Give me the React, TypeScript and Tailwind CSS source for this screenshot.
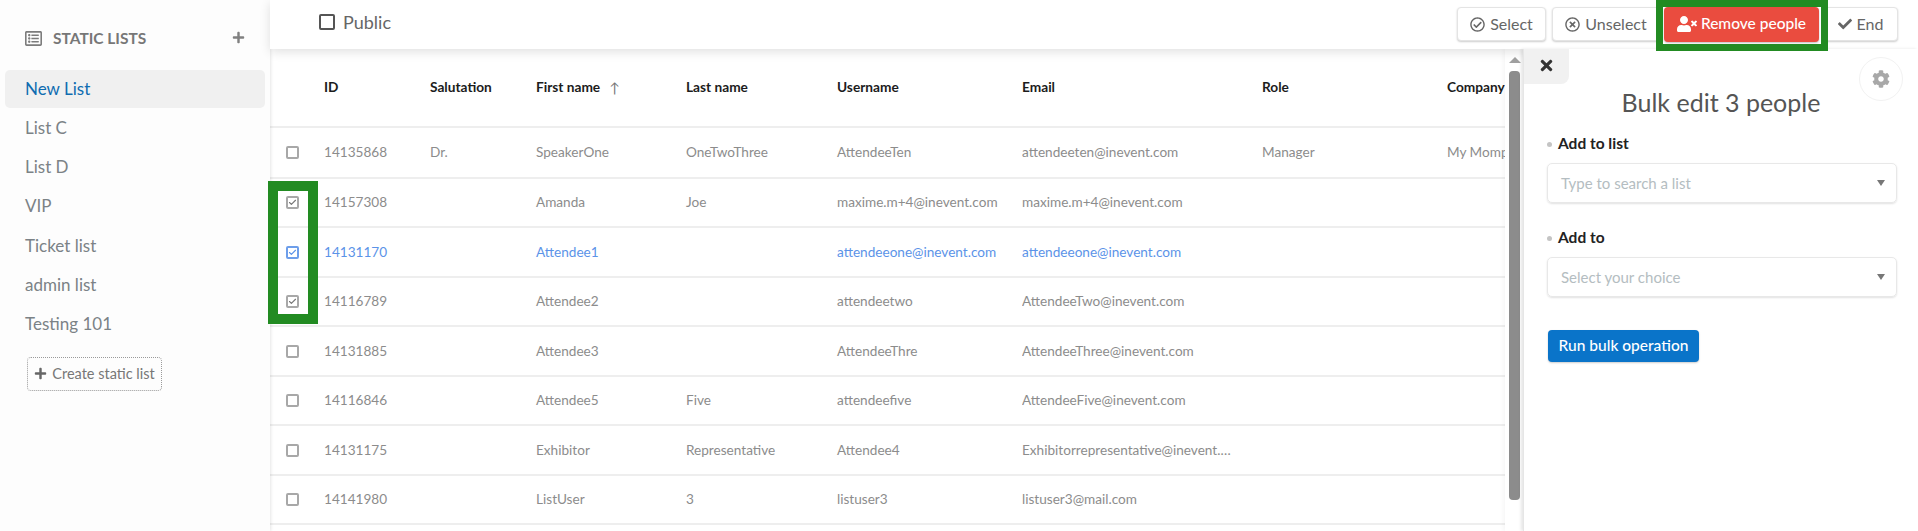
import {FaCheck, FaCog, FaPlus, FaRegCheckCircle, FaRegListAlt, FaRegTimesCircle, FaTimes, FaUserTimes} from 'react-icons/fa';
import {Check} from 'lucide-react';

type Person = {
  id: string;
  salutation?: string;
  first: string;
  last?: string;
  username: string;
  email: string;
  role?: string;
  company?: string;
  checked?: boolean;
  active?: boolean;
  rowClass: string;
};

const lists = ['List C', 'List D', 'VIP', 'Ticket list', 'admin list', 'Testing 101'];

const people: Person[] = [
  {id: '14135868', salutation: 'Dr.', first: 'SpeakerOne', last: 'OneTwoThree', username: 'AttendeeTen', email: 'attendeeten@inevent.com', role: 'Manager', company: 'My Mompany', rowClass: 'h-[51px]'},
  {id: '14157308', first: 'Amanda', last: 'Joe', username: 'maxime.m+4@inevent.com', email: 'maxime.m+4@inevent.com', checked: true, rowClass: 'h-[49px]'},
  {id: '14131170', first: 'Attendee1', username: 'attendeeone@inevent.com', email: 'attendeeone@inevent.com', checked: true, active: true, rowClass: 'h-[50px]'},
  {id: '14116789', first: 'Attendee2', username: 'attendeetwo', email: 'AttendeeTwo@inevent.com', checked: true, rowClass: 'h-[49px]'},
  {id: '14131885', first: 'Attendee3', username: 'AttendeeThre', email: 'AttendeeThree@inevent.com', rowClass: 'h-[50px]'},
  {id: '14116846', first: 'Attendee5', last: 'Five', username: 'attendeefive', email: 'AttendeeFive@inevent.com', rowClass: 'h-[49px]'},
  {id: '14131175', first: 'Exhibitor', last: 'Representative', username: 'Attendee4', email: 'Exhibitorrepresentative@inevent.com', rowClass: 'h-[50px]'},
  {id: '14141980', first: 'ListUser', last: '3', username: 'listuser3', email: 'listuser3@mail.com', rowClass: 'h-[49px]'},
];

const gridCols = 'grid grid-cols-[54px_106px_106px_150px_151px_185px_240px_185px_58px]';

function Checkbox({checked, active}: {checked?: boolean; active?: boolean}) {
  return (
    <span
      className={`flex h-[13px] w-[13px] items-center justify-center rounded-[2px] border-2 ${
        active ? 'border-[#6d9eea]' : 'border-[#a8a8a8]'
      }`}
    >
      {checked && (
        <Check
          size={9}
          strokeWidth={3}
          className={active ? 'text-[#5b93e8]' : 'text-[#777]'}
        />
      )}
    </span>
  );
}

function ToolButton({children, className}: {children: React.ReactNode; className: string}) {
  return (
    <button
      className={`flex h-[34px] items-center justify-center gap-[5px] rounded-[4px] border border-[#e4e4e4] bg-white text-[16px] text-[#666] shadow-[0_1px_2px_rgba(0,0,0,0.2)] ${className}`}
    >
      {children}
    </button>
  );
}

function Field({label, placeholder}: {label: string; placeholder: string}) {
  return (
    <div className="flex flex-col">
      <div className="flex h-[20px] items-center gap-[6px]">
        <span className="h-[5px] w-[5px] rounded-full bg-[#c4c4c4]" />
        <span className="text-[15.5px] font-bold text-[#222]">{label}</span>
      </div>
      <div className="mt-[9px] flex h-[40px] items-center justify-between rounded-[5px] border border-[#e8e8e8] pr-[11px] pl-[13px] shadow-[0_1px_2px_rgba(0,0,0,0.12)]">
        <span className="text-[15px] text-[#b4bdc1]">{placeholder}</span>
        <span className="h-0 w-0 border-x-[4px] border-t-[6px] border-x-transparent border-t-[#777]" />
      </div>
    </div>
  );
}

export default function App() {
  return (
    <div
      className="relative flex h-[531px] w-[1918px] overflow-hidden bg-white"
      style={{fontFamily: 'Lato, "Open Sans", sans-serif'}}
    >
      {/* left lists */}
      <aside className="z-10 flex w-[270px] shrink-0 flex-col bg-[#fdfdfd] px-[5px] shadow-[1px_0_3px_rgba(0,0,0,0.1)]">
        <div className="flex h-[70px] items-start justify-between pt-[27px] pr-[20px] pl-[20px]">
          <div className="flex items-center gap-[11px] text-[#7c7c7c]">
            <FaRegListAlt size={17} />
            <span className="text-[15.5px] font-bold text-[#777]">STATIC LISTS</span>
          </div>
          <FaPlus size={13} className="mt-[4px] text-[#808080]" />
        </div>
        <div className="flex h-[38px] items-center rounded-[5px] bg-[#f0f0f0] pl-[20px] text-[17px] text-[#0f6cb0]">
          New List
        </div>
        <div className="flex flex-col">
          {lists.map((name) => (
            <div key={name} className="flex h-[39.3px] items-center pl-[20px] text-[17px] text-[#7b8286]">
              {name}
            </div>
          ))}
        </div>
        <button className="mt-[13px] ml-[22px] flex h-[34px] w-[135px] items-center justify-center gap-[5px] rounded-[4px] border border-dotted border-[#9a9a9a] text-[14.5px] text-[#777]">
          <FaPlus size={13} className="text-[#666]" />
          Create static list
        </button>
      </aside>

      <div className="flex min-w-0 flex-1 flex-col">
        {/* top bar */}
        <header className="z-10 flex h-[49px] shrink-0 items-center justify-between bg-white pr-[20px] pl-[49px] shadow-[0_3px_10px_rgba(0,0,0,0.12)]">
          <div className="-mt-[5px] flex items-center gap-[8px]">
            <span className="h-[16px] w-[16px] rounded-[2px] border-2 border-[#555]" />
            <span className="text-[18px] text-[#666]">Public</span>
          </div>
          <div className="-mt-[1px] flex items-center gap-[4px]">
            <ToolButton className="mr-[2px] w-[89px]">
              <FaRegCheckCircle size={15} />
              Select
            </ToolButton>
            <ToolButton className="w-[108px]">
              <FaRegTimesCircle size={15} />
              Unselect
            </ToolButton>
            <button className="flex h-[35px] w-[155px] items-center justify-center gap-[4px] rounded-[4px] bg-[#ea4c3f] text-[15.5px] font-medium text-white shadow-[0_1px_2px_rgba(0,0,0,0.25)]">
              <FaUserTimes size={20} />
              Remove people
            </button>
            <ToolButton className="w-[75px]">
              <FaCheck size={14} />
              End
            </ToolButton>
          </div>
        </header>

        <div className="flex min-h-0 flex-1">
          {/* people table */}
          <div className="w-[1235px] shrink-0 overflow-hidden">
            <div className={`${gridCols} h-[79px] items-center border-b-2 border-[#eeeeee] text-[13.7px] font-bold text-[#1c1c1c]`}>
              <span />
              <span>ID</span>
              <span>Salutation</span>
              <span className="flex items-center gap-[9px]">
                First name
                <span className="text-[14px] font-normal text-[#777]">↑</span>
              </span>
              <span>Last name</span>
              <span>Username</span>
              <span>Email</span>
              <span>Role</span>
              <span>Company</span>
            </div>
            {people.map((p) => (
              <div
                key={p.id}
                className={`${gridCols} ${p.rowClass} items-center border-b-2 border-[#eeeeee] text-[13.6px] ${
                  p.active ? 'text-[#5b93e8]' : 'text-[#8c8c8c]'
                }`}
              >
                <span className="pl-[16px]">
                  <Checkbox checked={p.checked} active={p.active} />
                </span>
                <span>{p.id}</span>
                <span>{p.salutation}</span>
                <span>{p.first}</span>
                <span>{p.last}</span>
                <span>{p.username}</span>
                <span className="truncate pr-[30px]">{p.email}</span>
                <span>{p.role}</span>
                <span className="whitespace-nowrap">{p.company}</span>
              </div>
            ))}
          </div>

          {/* scrollbar */}
          <div className="flex w-[18px] shrink-0 flex-col items-center bg-white pt-[8px] pl-[1px] shadow-[-2px_0_4px_rgba(0,0,0,0.04)]">
            <span className="h-0 w-0 border-x-[6px] border-b-[6px] border-x-transparent border-b-[#a0a0a0]" />
            <span className="mt-[8px] h-[429px] w-[11px] shrink-0 rounded-b-[4px] rounded-t-[4px] bg-[#8c8c8c]" />
          </div>

          {/* bulk edit panel */}
          <section className="relative z-10 flex-1 border-l-[1px] border-[#e6e6e6] bg-white shadow-[-2px_0_3px_rgba(0,0,0,0.1)]">
            <div className="flex h-[35px] w-[45px] items-center justify-center rounded-br-[8px] bg-[#f1f1f1]">
              <FaTimes size={17} className="-mt-[2px] -ml-[1px] text-[#333]" />
            </div>
            <div className="absolute top-[8px] right-[15px] flex h-[44px] w-[44px] items-center justify-center rounded-full border border-[#f2f2f2] bg-white">
              <FaCog size={18} className="text-[#a8a8a8]" />
            </div>
            <h2 className="mt-[3px] text-center text-[25px] leading-[30px] font-normal text-[#555]">
              Bulk edit 3 people
            </h2>
            <div className="mt-[17px] flex flex-col gap-[25px] pr-[21px] pl-[23px]">
              <Field label="Add to list" placeholder="Type to search a list" />
              <Field label="Add to" placeholder="Select your choice" />
            </div>
            <button className="mt-[33px] ml-[24px] h-[32px] w-[151px] rounded-[4px] bg-[#0a74c9] text-[15.5px] font-medium text-white shadow-[0_1px_2px_rgba(0,0,0,0.2)]">
              Run bulk operation
            </button>
          </section>
        </div>
      </div>

      {/* green highlight frames over the screenshot */}
      <div className="pointer-events-none absolute top-0 left-[1656px] z-20 h-[51px] w-[172px] border-[7px] border-[#228b22]" />
      <div className="pointer-events-none absolute top-[181px] left-[268px] z-20 h-[143px] w-[50px] border-[10px] border-[#228b22]" />
    </div>
  );
}
